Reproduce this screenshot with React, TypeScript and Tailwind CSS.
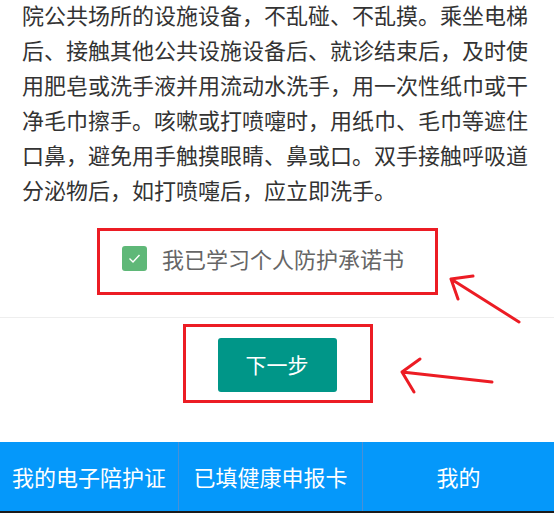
export default function App() {
  const tabs = [
    { label: '我的电子陪护证', w: 'w-[178px]' },
    { label: '已填健康申报卡', w: 'w-[184px]' },
    { label: '我的', w: 'flex-1' },
  ]

  return (
    <main
      className="relative h-[513px] w-[554px] overflow-hidden bg-white flex flex-col"
      style={{ fontFamily: '"Noto Sans CJK SC", "Noto Sans", sans-serif' }}
    >
      <p className="-mt-[3px] px-[22px] text-[22px] leading-[35px] text-[#333]">
        院公共场所的设施设备，不乱碰、不乱摸。乘坐电梯后、接触其他公共设施设备后、就诊结束后，及时使用肥皂或洗手液并用流动水洗手，用一次性纸巾或干净毛巾擦手。咳嗽或打喷嚏时，用纸巾、毛巾等遮住口鼻，避免用手触摸眼睛、鼻或口。双手接触呼吸道分泌物后，如打喷嚏后，应立即洗手。
      </p>

      <label className="mt-[39px] flex items-center gap-[15px] pl-[122px]">
        <span className="flex h-[25px] w-[25px] items-center justify-center rounded-[3px] bg-[#5fb878]">
          <svg width="15" height="15" viewBox="0 0 15 15" fill="none">
            <path d="M2.5 7.5 L6 11 L12.5 4" stroke="white" strokeWidth="1.4" />
          </svg>
        </span>
        <span className="text-[22px] leading-[25px] text-[#666]">我已学习个人防护承诺书</span>
      </label>

      <div className="mt-[46px] border-t border-[#eeeeee] flex justify-center pt-[20px]">
        <button className="h-[54px] w-[119px] rounded-[3px] bg-[#009688] text-[21px] text-white">
          下一步
        </button>
      </div>

      <nav className="mt-auto flex h-[71px] bg-[#0598fa] border-b-[2px] border-[#1b1b1b]">
        {tabs.map((t, i) => (
          <div
            key={t.label}
            className={`${t.w} flex items-center justify-center text-[22px] text-white ${
              i > 0 ? 'border-l border-[#4a8fd6]' : ''
            }`}
          >
            {t.label}
          </div>
        ))}
      </nav>

      {/* annotations */}
      <div className="absolute left-[97px] top-[228px] h-[67px] w-[341px] border-[3px] border-[#ec1c24]" />
      <div className="absolute left-[183px] top-[324px] h-[79px] w-[190px] border-[3px] border-[#ec1c24]" />
      <svg className="absolute inset-0 pointer-events-none" width="554" height="513" fill="none">
        <g stroke="#ec1c24" strokeWidth="3" strokeLinecap="round">
          <path d="M519 322 L451 279 M451 279 L473 276 M451 279 L458 299" />
          <path d="M492 382 L402 372 M402 372 L420 359 M402 372 L414 392" />
        </g>
      </svg>
    </main>
  )
}
